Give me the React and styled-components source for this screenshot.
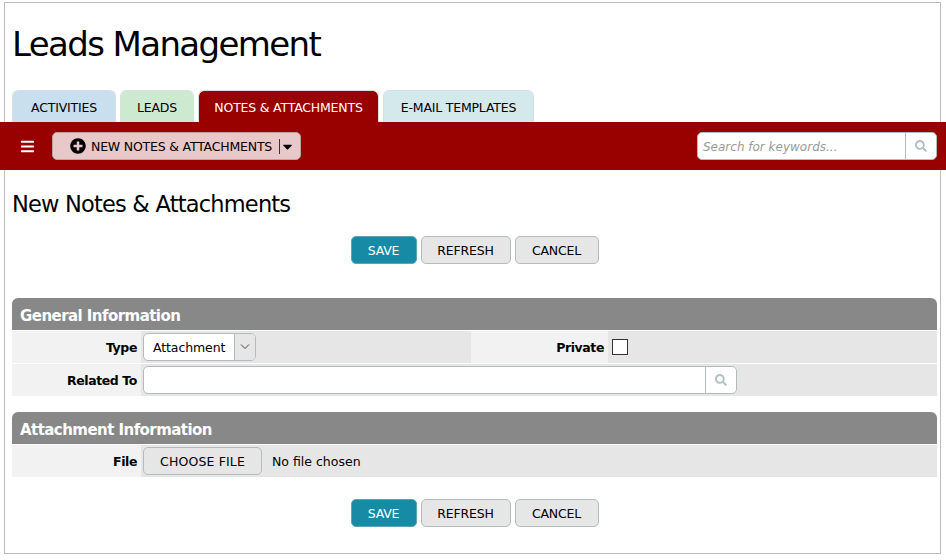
import styled, { createGlobalStyle } from 'styled-components';
import { FaBars, FaPlusCircle, FaSearch, FaCaretDown } from 'react-icons/fa';

const GlobalStyle = createGlobalStyle`
  html, body {
    margin: 0;
    padding: 0;
    background: #fff;
    font-family: 'DejaVu Sans', sans-serif;
    color: #000;
  }
`;

const tabs = [
  { name: 'ACTIVITIES', bg: '#c9deee', width: 104 },
  { name: 'LEADS', bg: '#cde9cf', width: 74 },
  { name: 'NOTES & ATTACHMENTS', bg: '#990000', width: 181, active: true },
  { name: 'E-MAIL TEMPLATES', bg: '#d3e9ec', width: 151 },
];

const FormButtons = () => (
  <ButtonRow>
    <ActionButton primary width={66}>SAVE</ActionButton>
    <ActionButton width={90}>REFRESH</ActionButton>
    <ActionButton width={84}>CANCEL</ActionButton>
  </ButtonRow>
);

const App = () => {
  return (
    <Frame>
      <GlobalStyle />
      <PageTitle>Leads Management</PageTitle>
      <TabBar>
        {tabs.map(tab => (
          <Tab key={tab.name} bg={tab.bg} width={tab.width} active={tab.active}>
            {tab.name}
          </Tab>
        ))}
      </TabBar>
      <Toolbar>
        <ToolbarLeft>
          <MenuIcon><FaBars size={15} /></MenuIcon>
          <NewButton>
            <FaPlusCircle size={16} />
            <NewLabel>NEW NOTES &amp; ATTACHMENTS</NewLabel>
            <CaretPart><FaCaretDown size={15} /></CaretPart>
          </NewButton>
        </ToolbarLeft>
        <SearchBox>
          <SearchInput placeholder="Search for keywords..." />
          <SearchAddon><FaSearch size={12} /></SearchAddon>
        </SearchBox>
      </Toolbar>

      <SubTitle>New Notes &amp; Attachments</SubTitle>
      <FormButtons />

      <Section first>
        <SectionHeader>General Information</SectionHeader>
        <Row>
          <Label>Type</Label>
          <Field width={330}>
            <Select>
              <SelectValue>Attachment</SelectValue>
              <SelectArrow>
                <svg width="10" height="6" viewBox="0 0 10 6" fill="none" stroke="#444" strokeWidth="1">
                  <path d="M1 0.5 L5 4.5 L9 0.5" />
                </svg>
              </SelectArrow>
            </Select>
          </Field>
          <Label width={137}>Private</Label>
          <Field grow>
            <Checkbox type="checkbox" />
          </Field>
        </Row>
        <Row>
          <Label>Related To</Label>
          <Field grow>
            <LookupBox>
              <LookupInput />
              <LookupAddon><FaSearch size={12} /></LookupAddon>
            </LookupBox>
          </Field>
        </Row>
      </Section>

      <Section>
        <SectionHeader>Attachment Information</SectionHeader>
        <Row>
          <Label>File</Label>
          <Field grow>
            <ChooseButton>CHOOSE FILE</ChooseButton>
            <FileName>No file chosen</FileName>
          </Field>
        </Row>
      </Section>

      <BottomButtons>
        <FormButtons />
      </BottomButtons>
    </Frame>
  );
};

export default App;

const Frame = styled.div`
  box-sizing: border-box;
  width: 937px;
  height: 552px;
  margin: 2px 0 0 4px;
  padding: 0 3px 0 7px;
  border: 1px solid #bdbdbd;
  overflow: visible;
`;

const PageTitle = styled.h1`
  margin: 0;
  height: 87px;
  padding-top: 21px;
  box-sizing: border-box;
  font-size: 34px;
  line-height: 40px;
  font-weight: 400;
  letter-spacing: -1.62px;
`;

const TabBar = styled.div`
  display: flex;
  gap: 4px;
  height: 32px;
`;

const Tab = styled.div`
  box-sizing: border-box;
  width: ${({ width }) => width}px;
  height: 32px;
  padding-top: 1px;
  display: flex;
  align-items: center;
  justify-content: center;
  background: ${({ bg }) => bg};
  background-clip: padding-box;
  color: ${({ active }) => (active ? '#fff' : '#000')};
  border: 1px solid #d9dfe0;
  border-bottom: none;
  border-radius: 6px 6px 0 0;
  font-size: 12.5px;
  letter-spacing: -0.2px;
`;

const Toolbar = styled.div`
  box-sizing: border-box;
  height: 48px;
  width: 946px;
  margin-left: -12px;
  padding: 0 9px 0 20px;
  display: flex;
  align-items: center;
  justify-content: space-between;
  background: #990000;
`;

const ToolbarLeft = styled.div`
  display: flex;
  align-items: center;
  gap: 17px;
`;

const MenuIcon = styled.div`
  display: flex;
  color: #fff;
`;

const NewButton = styled.div`
  box-sizing: border-box;
  width: 249px;
  height: 28px;
  padding-left: 17px;
  display: flex;
  align-items: center;
  background: #e8c8c8;
  border: 1px solid #b9a3a3;
  border-radius: 5px;
`;

const NewLabel = styled.span`
  margin-left: 5px;
  padding-top: 1px;
  font-size: 12.5px;
  letter-spacing: -0.2px;
`;

const CaretPart = styled.span`
  display: flex;
  align-items: center;
  height: 15px;
  margin-left: 7px;
  border-left: 1px solid #333;
`;

const SearchBox = styled.div`
  box-sizing: border-box;
  width: 240px;
  height: 28px;
  display: flex;
  background: #fff;
  border: 1px solid #b4bbbd;
  border-radius: 5px;
`;

const SearchInput = styled.input`
  flex: 1;
  min-width: 0;
  border: none;
  outline: none;
  background: transparent;
  border-radius: 5px;
  padding: 1px 5px 0;
  font-family: 'DejaVu Sans', sans-serif;
  font-size: 12px;
  font-style: italic;

  &::placeholder {
    color: #9a9a9a;
    opacity: 1;
  }
`;

const SearchAddon = styled.div`
  width: 31px;
  box-sizing: border-box;
  display: flex;
  align-items: center;
  justify-content: center;
  border-left: 1px solid #b4bbbd;
  color: #b4bfc4;
`;

const SubTitle = styled.h2`
  margin: 21px 0 0;
  height: 45px;
  font-size: 22.5px;
  line-height: 27px;
  font-weight: 400;
  letter-spacing: -0.8px;
`;

const ButtonRow = styled.div`
  display: flex;
  justify-content: center;
  gap: 4px;
`;

const ActionButton = styled.div`
  box-sizing: border-box;
  width: ${({ width }) => width}px;
  height: 28px;
  padding-top: 1px;
  display: flex;
  align-items: center;
  justify-content: center;
  background: ${({ primary }) => (primary ? '#178aa5' : '#e6e6e6')};
  color: ${({ primary }) => (primary ? '#fff' : '#000')};
  border: 1px solid ${({ primary }) => (primary ? '#5fa3b5' : '#b4bbbd')};
  border-radius: 5px;
  font-size: 12.5px;
  letter-spacing: -0.2px;
`;

const Section = styled.section`
  margin-top: ${({ first }) => (first ? 34 : 16)}px;
`;

const SectionHeader = styled.div`
  box-sizing: border-box;
  height: 32px;
  padding: 3px 0 0 8px;
  display: flex;
  align-items: center;
  background: #888888;
  color: #fff;
  border-radius: 6px 6px 0 0;
  font-family: 'DejaVu Sans', sans-serif;
  font-size: 15px;
  font-weight: 700;
  letter-spacing: -0.55px;
`;

const Row = styled.div`
  display: flex;
  height: 32px;
  margin-top: 1px;
`;

const Label = styled.div`
  box-sizing: border-box;
  width: ${({ width }) => width || 129}px;
  padding-right: 4px;
  display: flex;
  align-items: center;
  justify-content: flex-end;
  background: #f2f2f2;
  font-size: 12.5px;
  font-weight: 700;
  letter-spacing: -0.4px;
`;

const Field = styled.div`
  box-sizing: border-box;
  ${({ grow }) => (grow ? 'flex: 1;' : '')}
  ${({ width }) => (width ? `width: ${width}px;` : '')}
  padding-left: 2px;
  display: flex;
  align-items: center;
  background: #e6e6e6;
`;

const Select = styled.div`
  box-sizing: border-box;
  width: 113px;
  height: 28px;
  display: flex;
  background: #fff;
  border: 1px solid #b4bbbd;
  border-radius: 5px;
`;

const SelectValue = styled.span`
  flex: 1;
  padding-left: 9px;
  display: flex;
  align-items: center;
  font-size: 12.5px;
  letter-spacing: -0.1px;
`;

const SelectArrow = styled.span`
  width: 20px;
  display: flex;
  align-items: center;
  justify-content: center;
  background: #e6e6e6;
  border-left: 1px solid #b4bbbd;
  border-radius: 0 4px 4px 0;
`;

const Checkbox = styled.input`
  appearance: none;
  box-sizing: border-box;
  width: 16px;
  height: 16px;
  margin: 0 0 0 2px;
  background: #fff;
  border: 1px solid #333;
`;

const LookupBox = styled.div`
  box-sizing: border-box;
  width: 594px;
  height: 28px;
  display: flex;
  background: #fff;
  border: 1px solid #b4bbbd;
  border-radius: 5px;
`;

const LookupInput = styled.input`
  flex: 1;
  min-width: 0;
  border: none;
  outline: none;
  background: transparent;
  border-radius: 5px;
`;

const LookupAddon = styled.div`
  width: 31px;
  box-sizing: border-box;
  display: flex;
  align-items: center;
  justify-content: center;
  border-left: 1px solid #b4bbbd;
  color: #b4bfc4;
`;

const ChooseButton = styled.div`
  box-sizing: border-box;
  width: 119px;
  height: 28px;
  display: flex;
  align-items: center;
  justify-content: center;
  background: #e6e6e6;
  border: 1px solid #b4bbbd;
  border-radius: 5px;
  font-size: 12.5px;
  letter-spacing: 0.15px;
`;

const FileName = styled.span`
  margin-left: 10px;
  font-size: 12.5px;
`;

const BottomButtons = styled.div`
  margin-top: 22px;
`;
